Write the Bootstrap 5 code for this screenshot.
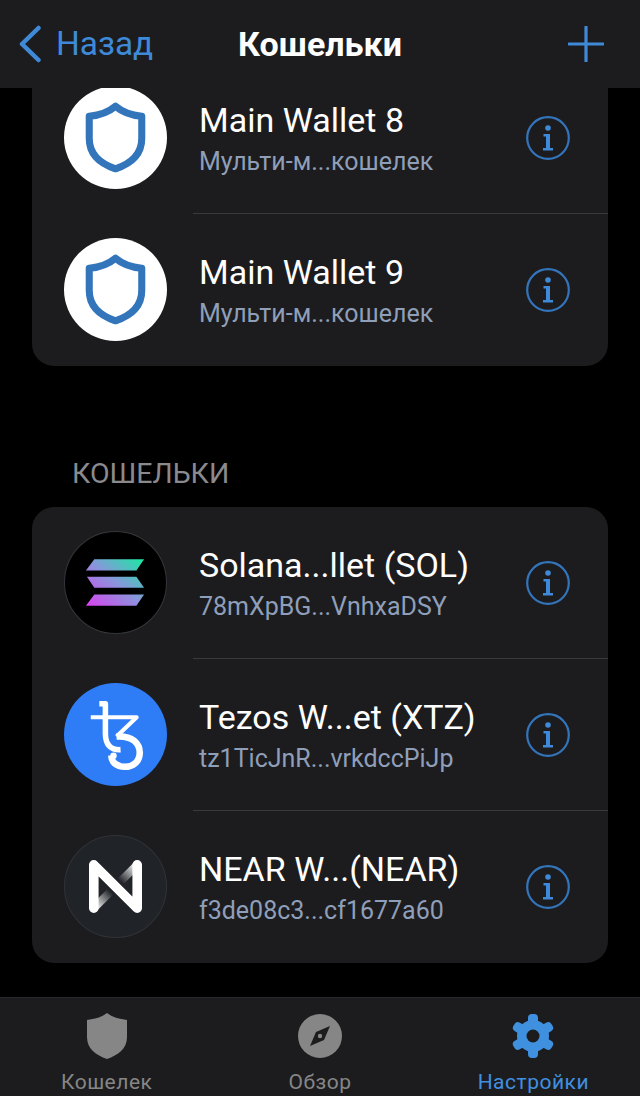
<!DOCTYPE html>
<html lang="ru">
  <head>
    <meta charset="UTF-8" />
    <meta name="viewport" content="width=device-width, initial-scale=1.0" />
    <title>Кошельки</title>
    <link
      href="https://cdn.jsdelivr.net/npm/bootstrap@5.3.0/dist/css/bootstrap.min.css"
      rel="stylesheet"
    />
    <style>
      html,
      body {
        height: 100%;
      }
      body {
        background-color: #000;
        font-family: Roboto, "Liberation Sans", sans-serif;
        color: #fff;
        overflow: hidden;
      }
      .app-shell {
        height: 1096px;
      }
      .top-bar {
        height: 88px;
        background-color: #1c1c1e;
        padding: 0 36px 0 18px;
        flex: none;
      }
      .top-left {
        width: 198px;
      }
      .top-right {
        width: 180px;
      }
      .back-link {
        color: #3f8ad8;
        font-size: 33.4px;
        gap: 14px;
      }
      .top-title {
        font-size: 34px;
        font-weight: 700;
      }
      .scroll-area {
        overflow: hidden;
        min-height: 0;
      }
      .scroll-inner {
        margin-top: -26px;
      }
      .panel {
        background-color: #1c1c1e;
        border: 0;
        border-radius: 22px;
        margin: 0 32px;
        overflow: hidden;
      }
      .wallet-row {
        height: 152px;
        padding-left: 32px;
        gap: 26px;
      }
      .wallet-logo {
        width: 103px;
        height: 103px;
        flex: none;
        margin-top: -1px;
      }
      .wallet-body {
        height: 100%;
        padding: 0 38px 0 6px;
        border-bottom: 1px solid #3a3a3e;
      }
      .wallet-row:last-child .wallet-body {
        border-bottom: 0;
      }
      .wallet-name {
        font-size: 34px;
        line-height: 40px;
      }
      .wallet-sub {
        font-size: 25px;
        line-height: 28px;
        margin-top: 8px;
        color: #8f9fba;
      }
      .section-label {
        margin: 84px 0 9px 72px;
        font-size: 28.500px;
        line-height: 48px;
        height: 48px;
        color: #8a8a8e;
      }
      .tab-bar {
        height: 99px;
        background-color: #1c1c1e;
        border-top: 1px solid #2a2a2c;
        flex: none;
      }
      .tab-item {
        padding-top: 15px;
        font-size: 21px;
        letter-spacing: 0.5px;
        line-height: 24px;
        color: #868686;
        gap: 11px;
      }
      .tab-active {
        color: #4090e0;
      }
    </style>
  </head>
  <body>
    <svg width="0" height="0" class="position-absolute">
      <defs>
        <symbol id="info" viewBox="0 0 44 44">
          <circle cx="22" cy="22" r="20.8" fill="none" stroke="#3375bb" stroke-width="2.2" />
          <circle cx="22" cy="12" r="2.8" fill="#3f8ad8" />
          <path d="M17.5 18h6.5v14h3v2.5h-10V32h3V20.5h-2.5z" fill="#3f8ad8" />
        </symbol>
        <symbol id="trust" viewBox="0 0 102 102">
          <circle cx="51" cy="51" r="51" fill="#fff" />
          <path
            d="M51 20C58 26 67 29 77 30V52C77 68 66 77 51 82C36 77 25 68 25 52V30C35 29 44 26 51 20Z"
            fill="none"
            stroke="#3375bb"
            stroke-width="7"
            stroke-linejoin="round"
          />
        </symbol>
        <linearGradient id="solGrad" gradientUnits="userSpaceOnUse" x1="28" y1="80" x2="74" y2="22">
          <stop offset="0" stop-color="#dc3ff0" />
          <stop offset="0.5" stop-color="#8a95dc" />
          <stop offset="1" stop-color="#14eda0" />
        </linearGradient>
        <linearGradient id="nearA" gradientUnits="userSpaceOnUse" x1="30" y1="72" x2="46" y2="56">
          <stop offset="0" stop-color="#fff" />
          <stop offset="1" stop-color="#fff" stop-opacity="0" />
        </linearGradient>
        <linearGradient id="nearB" gradientUnits="userSpaceOnUse" x1="72" y1="30" x2="56" y2="46">
          <stop offset="0" stop-color="#fff" />
          <stop offset="1" stop-color="#fff" stop-opacity="0" />
        </linearGradient>
      </defs>
    </svg>

    <div class="app-shell d-flex flex-column">
      <header class="top-bar d-flex align-items-center justify-content-between">
        <div class="top-left">
          <div class="back-link d-flex align-items-center">
            <svg width="24" height="38" viewBox="0 0 24 38">
              <path d="M20.5 3L4 19l16.500 16" fill="none" stroke="#3f8ad8" stroke-width="4.500" stroke-linecap="round" stroke-linejoin="round" />
            </svg>
            <span>Назад</span>
          </div>
        </div>
        <div class="top-title">Кошельки</div>
        <div class="top-right d-flex justify-content-end">
          <svg width="36" height="36" viewBox="0 0 36 36">
            <path d="M18 1v34M1 18h34" stroke="#3f8ad8" stroke-width="3.200" stroke-linecap="round" />
          </svg>
        </div>
      </header>

      <main class="scroll-area flex-grow-1">
        <div class="scroll-inner">
          <div class="card panel">
            <div class="wallet-row d-flex align-items-center">
              <svg class="wallet-logo"><use href="#trust" /></svg>
              <div class="wallet-body flex-grow-1 d-flex align-items-center justify-content-between">
                <div>
                  <div class="wallet-name">Main Wallet 8</div>
                  <div class="wallet-sub">Мульти-м...кошелек</div>
                </div>
                <svg width="44" height="44"><use href="#info" /></svg>
              </div>
            </div>
            <div class="wallet-row d-flex align-items-center">
              <svg class="wallet-logo"><use href="#trust" /></svg>
              <div class="wallet-body flex-grow-1 d-flex align-items-center justify-content-between">
                <div>
                  <div class="wallet-name">Main Wallet 9</div>
                  <div class="wallet-sub">Мульти-м...кошелек</div>
                </div>
                <svg width="44" height="44"><use href="#info" /></svg>
              </div>
            </div>
          </div>

          <div class="section-label">КОШЕЛЬКИ</div>

          <div class="card panel">
            <div class="wallet-row d-flex align-items-center">
              <svg class="wallet-logo" viewBox="0 0 102 102">
                <circle cx="51" cy="51" r="50.500" fill="#000" stroke="#33363b" />
                <path d="M30 28H79.300L71.700 39H21.700Z M22.700 45.300H71.700L79.300 56.300H30Z M30 63H79.300L71.700 74H21.700Z" fill="url(#solGrad)" />
              </svg>
              <div class="wallet-body flex-grow-1 d-flex align-items-center justify-content-between">
                <div>
                  <div class="wallet-name">Solana...llet (SOL)</div>
                  <div class="wallet-sub">78mXpBG...VnhxaDSY</div>
                </div>
                <svg width="44" height="44"><use href="#info" /></svg>
              </div>
            </div>
            <div class="wallet-row d-flex align-items-center">
              <svg class="wallet-logo" viewBox="0 0 102 102">
                <circle cx="51" cy="51" r="51" fill="#2f7df6" />
                <g fill="none" stroke="#fff" stroke-linejoin="round">
                  <path d="M26.500 34H72L52 53" stroke-width="4" />
                  <path d="M35 20.500H41V50C41 62 47 66.500 56 66" stroke-width="5.500" />
                  <path d="M52 53C68 52 75 60 75 69C75 78 68 83 60 83C52 83 46.500 78 47 72" stroke-width="6.500" />
                </g>
                <circle cx="49" cy="72" r="3.200" fill="#fff" />
              </svg>
              <div class="wallet-body flex-grow-1 d-flex align-items-center justify-content-between">
                <div>
                  <div class="wallet-name">Tezos W...et (XTZ)</div>
                  <div class="wallet-sub">tz1TicJnR...vrkdccPiJp</div>
                </div>
                <svg width="44" height="44"><use href="#info" /></svg>
              </div>
            </div>
            <div class="wallet-row d-flex align-items-center">
              <svg class="wallet-logo" viewBox="0 0 102 102">
                <circle cx="51" cy="51" r="50.500" fill="#202327" stroke="#2f3338" />
                <path d="M30 72L46 56" stroke="url(#nearA)" stroke-width="8" fill="none" />
                <path d="M72 30L56 46" stroke="url(#nearB)" stroke-width="8" fill="none" />
                <path d="M29.500 72.500V29.500L72.500 72.500V29.500" fill="none" stroke="#fff" stroke-width="9.500" stroke-linejoin="round" stroke-linecap="round" />
              </svg>
              <div class="wallet-body flex-grow-1 d-flex align-items-center justify-content-between">
                <div>
                  <div class="wallet-name">NEAR W...(NEAR)</div>
                  <div class="wallet-sub">f3de08c3...cf1677a60</div>
                </div>
                <svg width="44" height="44"><use href="#info" /></svg>
              </div>
            </div>
          </div>
        </div>
      </main>

      <nav class="tab-bar d-flex">
        <div class="tab-item w-100 d-flex flex-column align-items-center">
          <svg width="42" height="46" viewBox="0 0 42 46">
            <path d="M21 0C26 4 33 6 41 7V24C41 36 32 42 21 46C10 42 1 36 1 24V7C9 6 16 4 21 0Z" fill="#868686" />
          </svg>
          <span>Кошелек</span>
        </div>
        <div class="tab-item w-100 d-flex flex-column align-items-center">
          <svg width="44" height="46" viewBox="0 0 44 46">
            <circle cx="22" cy="23" r="22" fill="#868686" />
            <path d="M32 13L26 27L12 33L18 19Z" fill="#1c1c1e" />
            <circle cx="22" cy="23" r="2.200" fill="#868686" />
          </svg>
          <span>Обзор</span>
        </div>
        <div class="tab-item tab-active w-100 d-flex flex-column align-items-center">
          <svg width="46" height="46" viewBox="0 0 46 46">
            <g fill="#4090e0">
              <circle cx="23" cy="23" r="16" />
              <rect x="18" y="1" width="10" height="44" rx="4" />
              <rect x="18" y="1" width="10" height="44" rx="4" transform="rotate(60 23 23)" />
              <rect x="18" y="1" width="10" height="44" rx="4" transform="rotate(120 23 23)" />
            </g>
            <circle cx="23" cy="23" r="6.500" fill="#1c1c1e" />
          </svg>
          <span>Настройки</span>
        </div>
      </nav>
    </div>

    <script src="https://cdn.jsdelivr.net/npm/bootstrap@5.3.0/dist/js/bootstrap.bundle.min.js"></script>
  </body>
</html>
